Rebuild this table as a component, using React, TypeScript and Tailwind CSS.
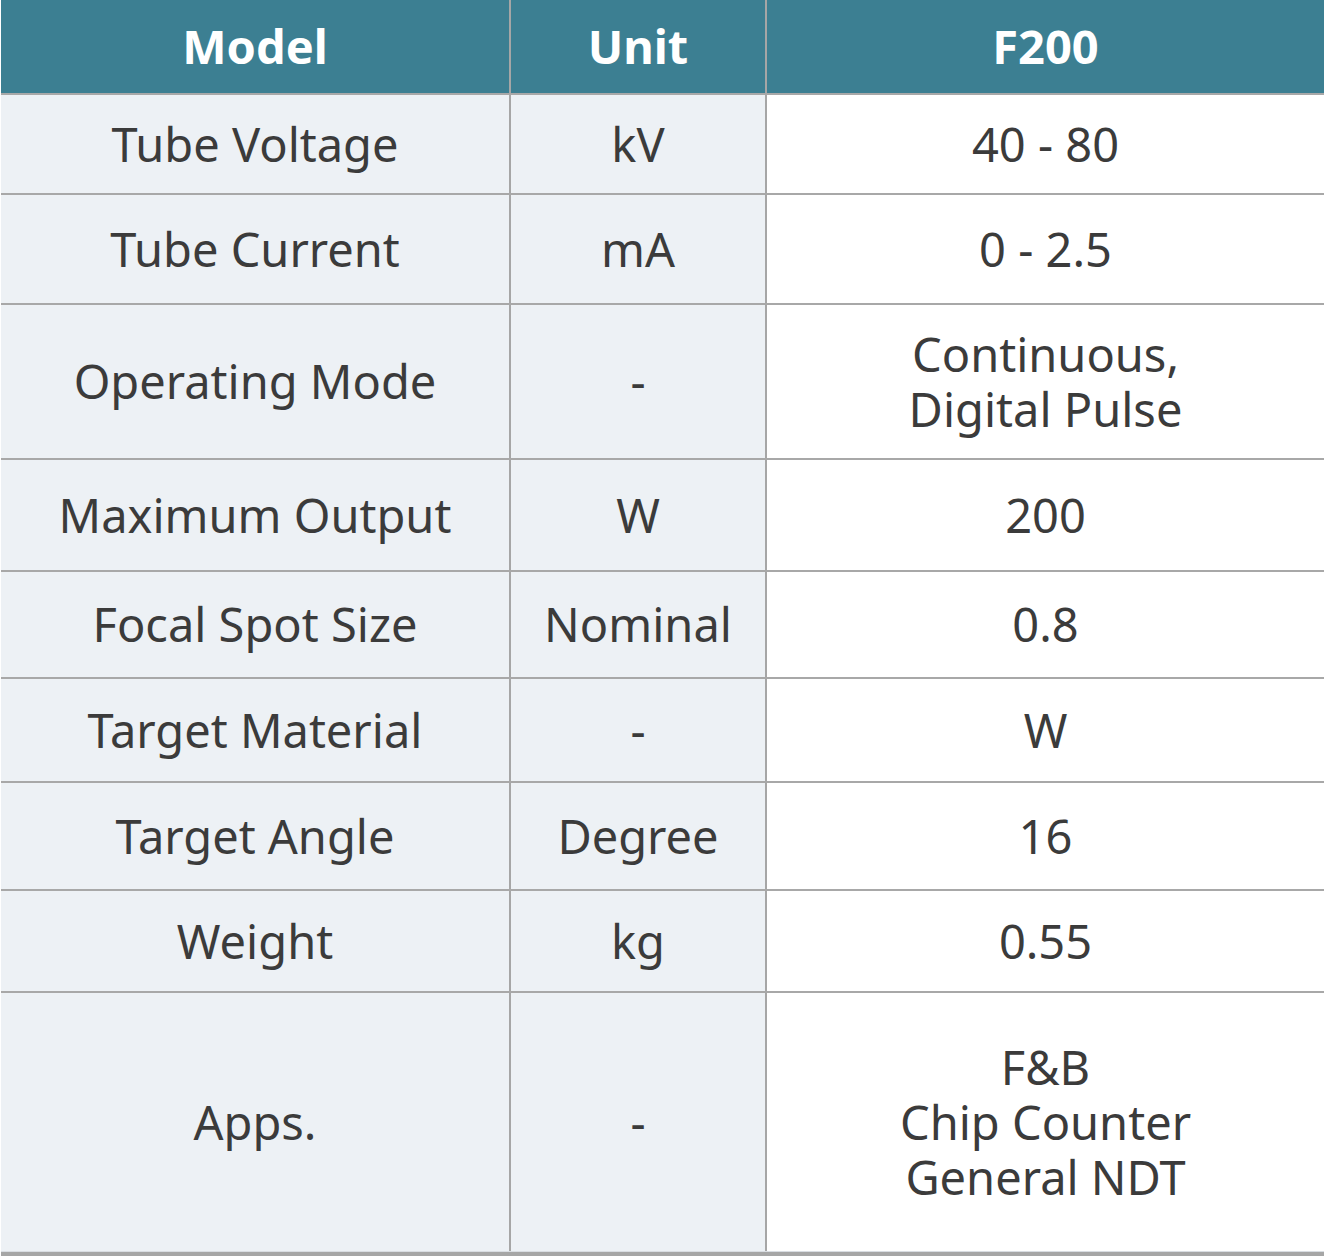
const rows: { label: string; unit: string; value: string[]; h: string }[] = [
  { label: "Tube Voltage", unit: "kV", value: ["40 - 80"], h: "h-[98px]" },
  { label: "Tube Current", unit: "mA", value: ["0 - 2.5"], h: "h-[108px]" },
  { label: "Operating Mode", unit: "-", value: ["Continuous,", "Digital Pulse"], h: "h-[153px]" },
  { label: "Maximum Output", unit: "W", value: ["200"], h: "h-[110px]" },
  { label: "Focal Spot Size", unit: "Nominal", value: ["0.8"], h: "h-[105px]" },
  { label: "Target Material", unit: "-", value: ["W"], h: "h-[102px]" },
  { label: "Target Angle", unit: "Degree", value: ["16"], h: "h-[106px]" },
  { label: "Weight", unit: "kg", value: ["0.55"], h: "h-[100px]" },
  { label: "Apps.", unit: "-", value: ["F&B", "Chip Counter", "General NDT"], h: "h-[258px]" },
]

export default function App() {
  return (
    <div className="w-[1324px] h-[1258px] bg-white pl-px font-['Noto_Sans',sans-serif]">
      <div className="flex h-[93px] bg-[#3c7f92] text-white font-bold text-[47px]">
        <div className="w-[508px] flex items-center justify-center">Model</div>
        <div className="w-[2px] bg-[#a6a6a6]" />
        <div className="w-[254px] flex items-center justify-center">Unit</div>
        <div className="w-[2px] bg-[#a6a6a6]" />
        <div className="flex-1 flex items-center justify-center">F200</div>
      </div>
      {rows.map((r) => (
        <div key={r.label}>
          <div className="h-[2px] bg-[#a8a8a8]" />
          <div className={`flex ${r.h} text-[47px] text-[#3b3b3b]`}>
            <div className="w-[508px] bg-[#edf1f5] flex items-center justify-center">{r.label}</div>
            <div className="w-[2px] bg-[#a6a6a6]" />
            <div className="w-[254px] bg-[#edf1f5] flex items-center justify-center">{r.unit}</div>
            <div className="w-[2px] bg-[#a6a6a6]" />
            <div className="flex-1 flex flex-col items-center justify-center leading-[55px]">
              {r.value.map((v) => (
                <span key={v}>{v}</span>
              ))}
            </div>
          </div>
        </div>
      ))}
      <div className="h-px bg-[#d9dde2]" />
      <div className="h-[4px] bg-[#a6a6a6]" />
    </div>
  )
}
